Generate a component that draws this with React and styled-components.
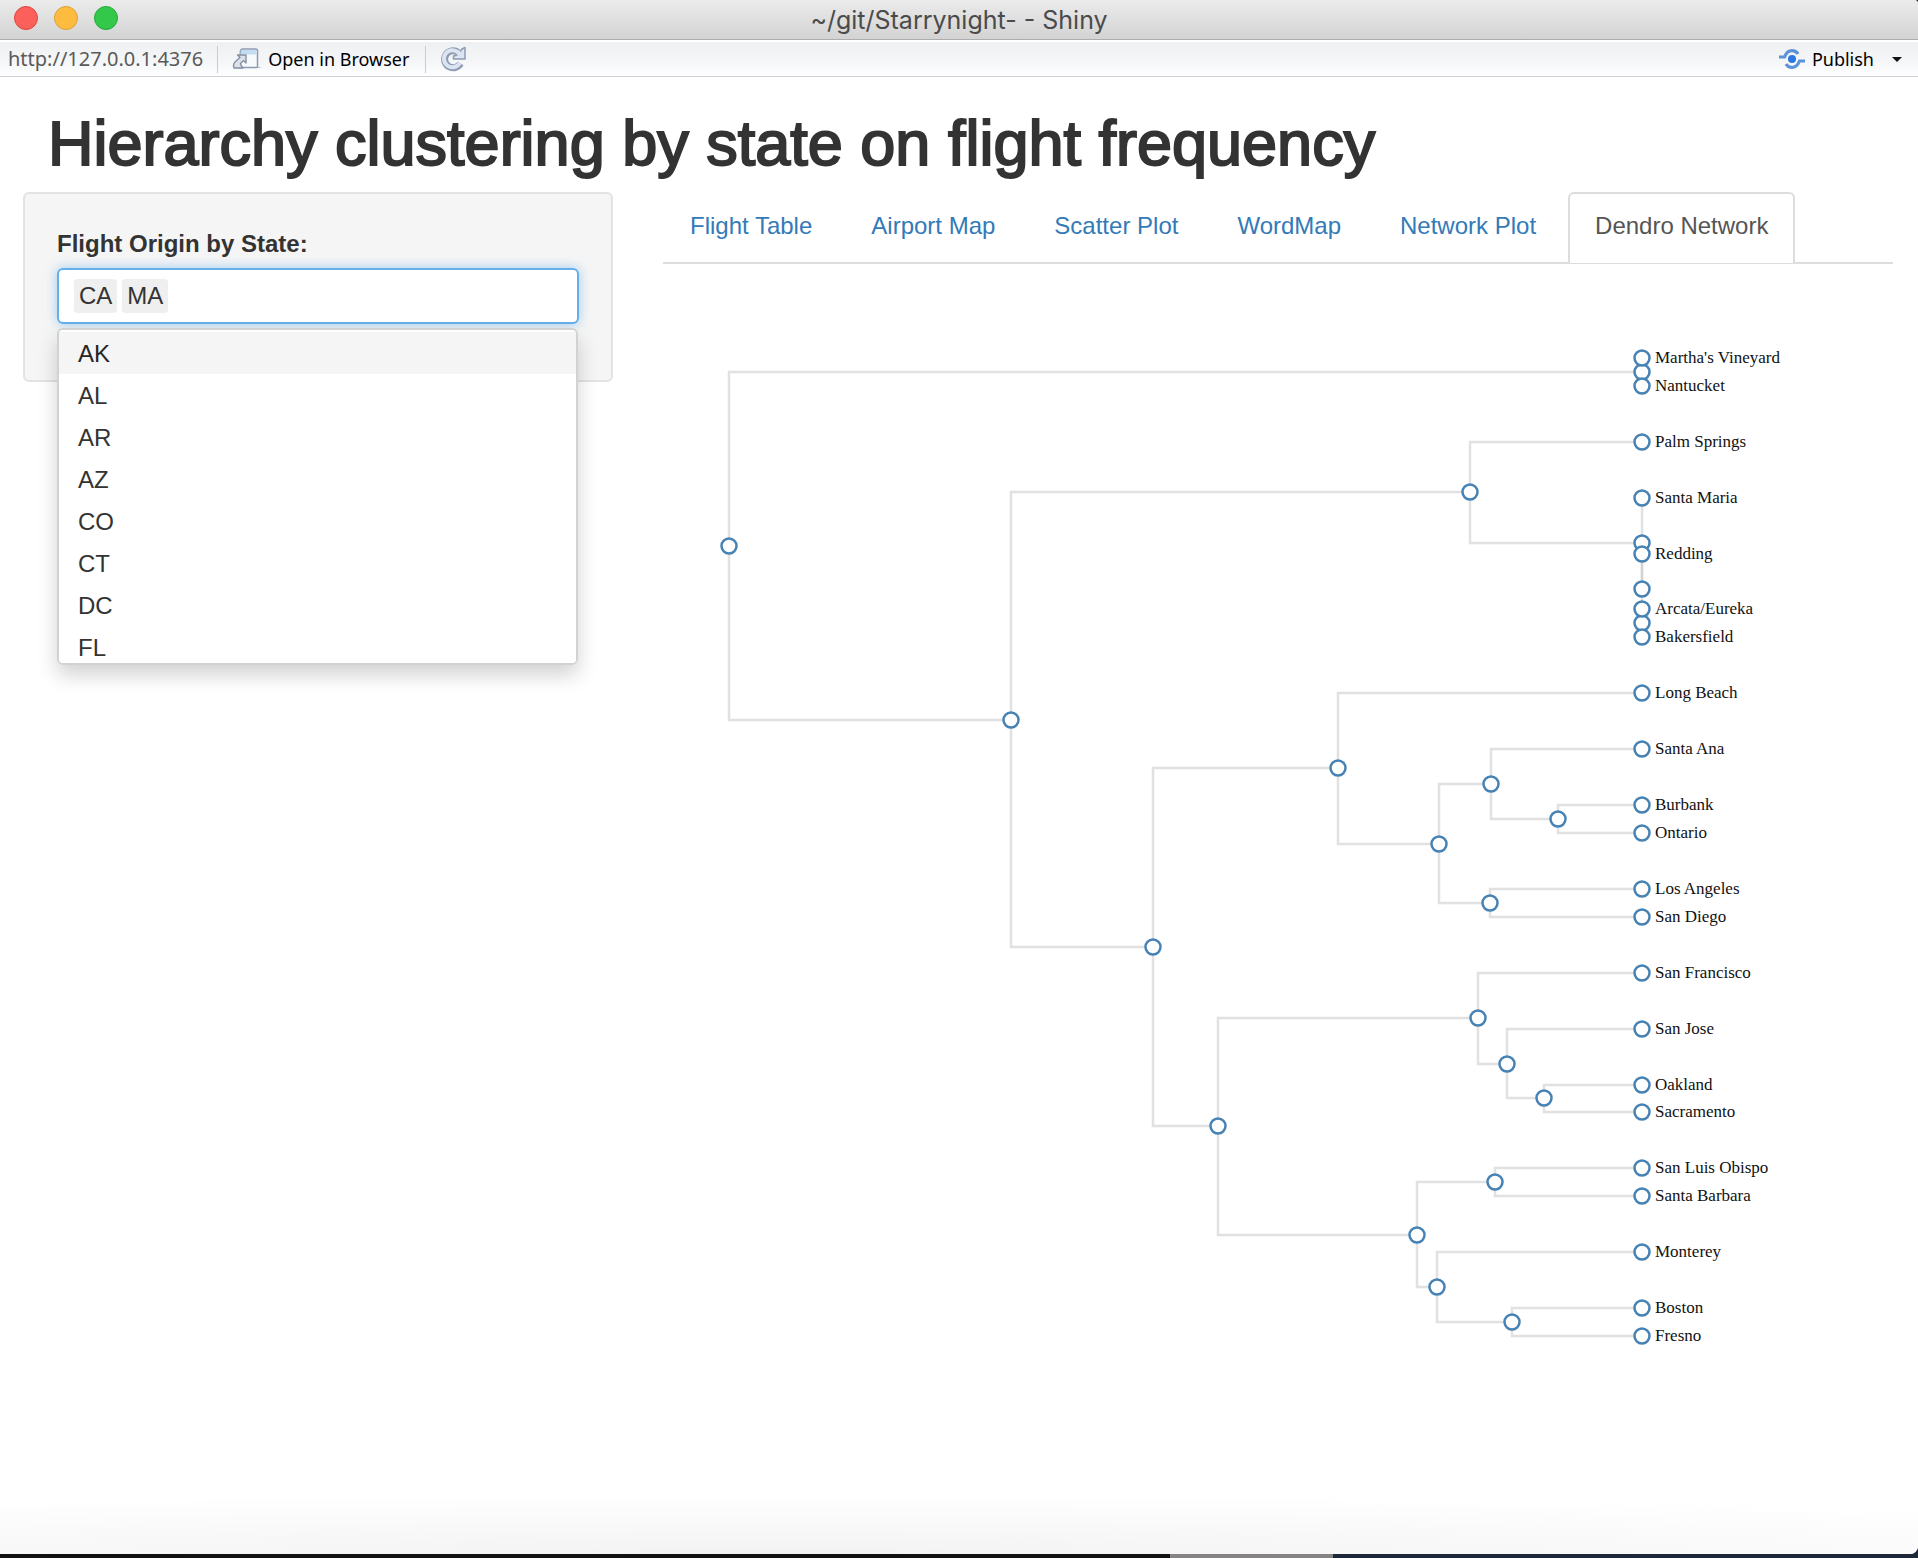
import React from "react";
import styled, { createGlobalStyle } from "styled-components";

const sans = `"Liberation Sans", Helvetica, Arial, sans-serif`;
const chrome = `"Noto Sans", "Open Sans", sans-serif`;

const GlobalStyle = createGlobalStyle`
  *, *::before, *::after { box-sizing: border-box; }
  body {
    margin: 0;
    background: linear-gradient(90deg, #121212 61%, #868484 61%, #868484 69.5%, #1f2838 69.5%);
    color: #333;
    font: 24px/34px ${sans};
  }
`;

const Window = styled.div`
  display: flex;
  flex-direction: column;
  min-height: calc(100vh - 4px);
  margin-bottom: 4px;
  overflow: hidden;
  border-radius: 0 4px 8px 0;
  background: #fff;
`;

const TitleBar = styled.header`
  display: grid;
  grid-template-columns: 1fr auto 1fr;
  align-items: center;
  height: 40px;
  padding: 0 14px;
  background: linear-gradient(#ebebeb, #d3d3d3);
  border-bottom: 1px solid #adadad;
`;

const Lights = styled.div`
  display: flex;
  gap: 16px;
  align-self: start;
  padding-top: 6px;
`;

const Light = styled.button`
  width: 24px;
  height: 24px;
  padding: 0;
  border: 1px solid ${(p) => p.$edge};
  border-radius: 50%;
  background: ${(p) => p.$fill};
`;

const WindowTitle = styled.div`
  font: 25px/36px Inter, sans-serif;
  color: #4b4b4b;
`;

const Toolbar = styled.div`
  display: flex;
  align-items: center;
  height: 37px;
  padding: 0 14px 0 8px;
  border-top: 2px solid #fff;
  border-bottom: 1px solid #cdd0d6;
  background: linear-gradient(#eef1f3, #f4f5f7 50%, #fefefe);
  font: 18px/24px ${chrome};
`;

const Address = styled.span`
  font-size: 20px;
  color: #5a5a5a;
`;

const Divider = styled.span`
  width: 1px;
  height: 27px;
  margin: 0 12px 0 14px;
  background: #c9ccd0;
`;

const ToolButton = styled.button`
  display: flex;
  align-items: center;
  gap: 6px;
  padding: 0 2px;
  border: 0;
  background: none;
  color: #000;
  font: inherit;
`;

const Spacer = styled.div`
  flex: 1;
`;

const Caret = styled.span`
  margin-left: 12px;
  border: 5px solid transparent;
  border-top-color: #111;
  border-bottom: 0;
`;

const Page = styled.div`
  flex: 1;
  padding: 33px 25px 0 23px;
  background: radial-gradient(ellipse 90% 60px at 40% 100%, #f3f3f3, #fff);
`;

const Heading = styled.h1`
  margin: 0 0 16px;
  padding-left: 25px;
  font-size: 63px;
  line-height: 66px;
  font-weight: 400;
  -webkit-text-stroke: 2px #333;
`;

const Columns = styled.div`
  display: grid;
  grid-template-columns: 59fr 123fr;
  gap: 50px;
  align-items: start;
`;

const Sidebar = styled.form`
  padding: 33px 32px 56px;
  border: 2px solid #e3e3e3;
  border-radius: 6px;
  background: #f5f5f5;
`;

const Label = styled.label`
  display: block;
  margin-bottom: 7px;
  font-weight: 700;
`;

const SelectBox = styled.div`
  position: relative;
  display: flex;
  align-items: center;
  gap: 5px;
  height: 56px;
  padding: 0 15px;
  border: 2px solid #66afe9;
  border-radius: 6px;
  background: #fff;
  box-shadow: 0 0 12px rgba(102, 175, 233, 0.6);
`;

const Chip = styled.span`
  padding: 0 5px;
  border-radius: 4px;
  background: #efefef;
`;

const Search = styled.input`
  flex: 1;
  min-width: 0;
  padding: 0;
  border: 0;
  outline: 0;
  background: none;
  font: inherit;
  caret-color: transparent;
`;

const Options = styled.ul`
  position: absolute;
  z-index: 1;
  top: 58px;
  left: -2px;
  right: -1px;
  height: 337px;
  margin: 0;
  padding: 2px 0 0;
  overflow: auto;
  scrollbar-width: none;
  list-style: none;
  border: 2px solid #d2d2d2;
  border-radius: 6px;
  background: #fff;
  box-shadow: 0 10px 20px rgba(0, 0, 0, 0.18);
`;

const Option = styled.li`
  padding: 5px 19px 3px;
  background: ${(p) => (p.$active ? "#f5f5f5" : "#fff")};
  color: ${(p) => (p.$active ? "#262626" : "#333")};
`;

const Tabs = styled.nav`
  display: flex;
  gap: 5px;
  border-bottom: 2px solid #ddd;
`;

const Tab = styled.a`
  margin-bottom: -1px;
  padding: 15px 25px 20px;
  border: 2px solid ${(p) => (p.$active ? "#ddd" : "transparent")};
  border-bottom: 0;
  border-radius: 6px 6px 0 0;
  background: ${(p) => (p.$active ? "#fff" : "transparent")};
  color: ${(p) => (p.$active ? "#555" : "#337ab7")};
  text-decoration: none;
  white-space: nowrap;
`;

const Chart = styled.svg`
  display: block;
  width: 100%;
  height: auto;
`;

const Link = styled.path`
  fill: none;
  stroke: #c8c8c8;
  stroke-opacity: 0.55;
  stroke-width: 2.5px;
`;

const Node = styled.circle`
  fill: #fff;
  stroke: steelblue;
  stroke-width: 2.5px;
`;

const NodeLabel = styled.text`
  font: 17px "Liberation Serif", "Times New Roman", serif;
  fill: #111;
`;

const LEAF_X = 979;
const TOP = 94;
const SPAN = 978;
const ROWS = 35;

const leaf = (name, row) => ({ name, row, x: LEAF_X });
const join = (x, a, b) => ({ x, children: [a, b], row: (a.row + b.row) / 2 });

const tree = join(
  66,
  join(LEAF_X, leaf("Martha's Vineyard", 0), leaf("Nantucket", 1)),
  join(
    348,
    join(
      807,
      leaf("Palm Springs", 3),
      join(
        LEAF_X,
        leaf("Santa Maria", 5),
        join(
          LEAF_X,
          leaf("Redding", 7),
          join(LEAF_X, leaf("Arcata/Eureka", 9), leaf("Bakersfield", 10))
        )
      )
    ),
    join(
      490,
      join(
        675,
        leaf("Long Beach", 12),
        join(
          776,
          join(828, leaf("Santa Ana", 14), join(895, leaf("Burbank", 16), leaf("Ontario", 17))),
          join(827, leaf("Los Angeles", 19), leaf("San Diego", 20))
        )
      ),
      join(
        555,
        join(
          815,
          leaf("San Francisco", 22),
          join(844, leaf("San Jose", 24), join(881, leaf("Oakland", 26), leaf("Sacramento", 27)))
        ),
        join(
          754,
          join(832, leaf("San Luis Obispo", 29), leaf("Santa Barbara", 30)),
          join(774, leaf("Monterey", 32), join(849, leaf("Boston", 34), leaf("Fresno", 35)))
        )
      )
    )
  )
);

const yOf = (node) => Math.round(TOP + (node.row * SPAN) / ROWS);

// Breadth-first, so that deeper nodes are painted over their parents.
const nodes = [tree];
for (let i = 0; i < nodes.length; i += 1) {
  nodes.push(...(nodes[i].children || []));
}

function Dendrogram() {
  return (
    <Chart viewBox="0 0 1230 1200" role="img" aria-label="Airport dendrogram">
      {nodes.flatMap((parent) =>
        (parent.children || []).map((child) => (
          <Link
            key={`${parent.row}-${child.row}`}
            d={`M${parent.x},${yOf(parent)}V${yOf(child)}H${child.x}`}
          />
        ))
      )}
      {nodes.map((node) => (
        <g key={node.row}>
          <Node cx={node.x} cy={yOf(node)} r="7.5" />
          {node.name && (
            <NodeLabel x={node.x + 13} y={yOf(node) + 5}>
              {node.name}
            </NodeLabel>
          )}
        </g>
      ))}
    </Chart>
  );
}

function OpenIcon() {
  return (
    <svg width="30" height="22" viewBox="0 0 30 22" aria-hidden="true">
      <path d="M20 20h10l-4-1.600z" fill="#b9bfc9" />
      <path d="M8.500 2.500Q9 1 11 1h12.500Q25.500 1 25.500 3v15.500q0 1-1 1H7z" fill="#f7f9fc" stroke="#8d9ab0" strokeWidth="1.500" />
      <path d="M9 2h15.500v4.500H8.500z" fill="#c4dcf2" />
      <path d="M5.500 7H14v8l-2.500-2.500-3 3q0 2 2.500 4.500H2q-1.500-4 1.500-6.500L8 9.500z" fill="#dde2ea" stroke="#8590a3" strokeWidth="1.400" strokeLinejoin="round" />
    </svg>
  );
}

function RefreshIcon() {
  return (
    <svg width="26" height="26" viewBox="0 0 26 26" aria-hidden="true">
      <g fill="none" strokeLinejoin="round">
        <path d="M20.500 17.500A8.500 8.500 0 1 1 18 6.300" stroke="#8e9cb3" strokeWidth="7" />
        <path d="M25 1.500V13H13.500v-3l3.500-1 5-6z" fill="#dbe4f0" stroke="#8e9cb3" strokeWidth="1.500" />
        <path d="M19.800 17A8.500 8.500 0 1 1 18 6.300L20.500 9" stroke="#dbe4f0" strokeWidth="4" />
      </g>
    </svg>
  );
}

function PublishIcon() {
  return (
    <svg width="28" height="22" viewBox="0 0 28 22" aria-hidden="true">
      <circle cx="14" cy="11" r="4" fill="#2a78e0" />
      <g fill="none" stroke="#5c93d8" strokeWidth="3.200">
        <path d="M1 9h5.500Q9 2.600 14 2.600q4 0 6 3.400" />
        <path d="M27 13h-5.500Q19 19.400 14 19.400q-4 0-6-3.400" />
      </g>
    </svg>
  );
}

const states = ["AK", "AL", "AR", "AZ", "CO", "CT", "DC", "FL"];
const tabs = ["Flight Table", "Airport Map", "Scatter Plot", "WordMap", "Network Plot", "Dendro Network"];

export default function App() {
  return (
    <>
      <GlobalStyle />
      <Window>
        <TitleBar>
          <Lights>
            <Light aria-label="Close" $fill="#fc605b" $edge="#e0443e" />
            <Light aria-label="Minimize" $fill="#fdbc40" $edge="#dea034" />
            <Light aria-label="Zoom" $fill="#34c84a" $edge="#24a937" />
          </Lights>
          <WindowTitle>~/git/Starrynight- - Shiny</WindowTitle>
        </TitleBar>
        <Toolbar>
          <Address>http://127.0.0.1:4376</Address>
          <Divider />
          <ToolButton>
            <OpenIcon />
            Open in Browser
          </ToolButton>
          <Divider />
          <ToolButton aria-label="Reload">
            <RefreshIcon />
          </ToolButton>
          <Spacer />
          <ToolButton>
            <PublishIcon />
            Publish
            <Caret />
          </ToolButton>
        </Toolbar>
        <Page>
          <Heading>Hierarchy clustering by state on flight frequency</Heading>
          <Columns>
            <Sidebar>
              <Label htmlFor="origin">Flight Origin by State:</Label>
              <SelectBox>
                <Chip>CA</Chip>
                <Chip>MA</Chip>
                <Search id="origin" type="text" role="combobox" aria-expanded="true" aria-controls="states" autoComplete="off" />
                <Options id="states" role="listbox">
                  {states.map((state, i) => (
                    <Option key={state} role="option" aria-selected={i === 0} $active={i === 0}>
                      {state}
                    </Option>
                  ))}
                </Options>
              </SelectBox>
            </Sidebar>
            <main>
              <Tabs>
                {tabs.map((tab) => (
                  <Tab key={tab} href="#" $active={tab === "Dendro Network"}>
                    {tab}
                  </Tab>
                ))}
              </Tabs>
              <Dendrogram />
            </main>
          </Columns>
        </Page>
      </Window>
    </>
  );
}
